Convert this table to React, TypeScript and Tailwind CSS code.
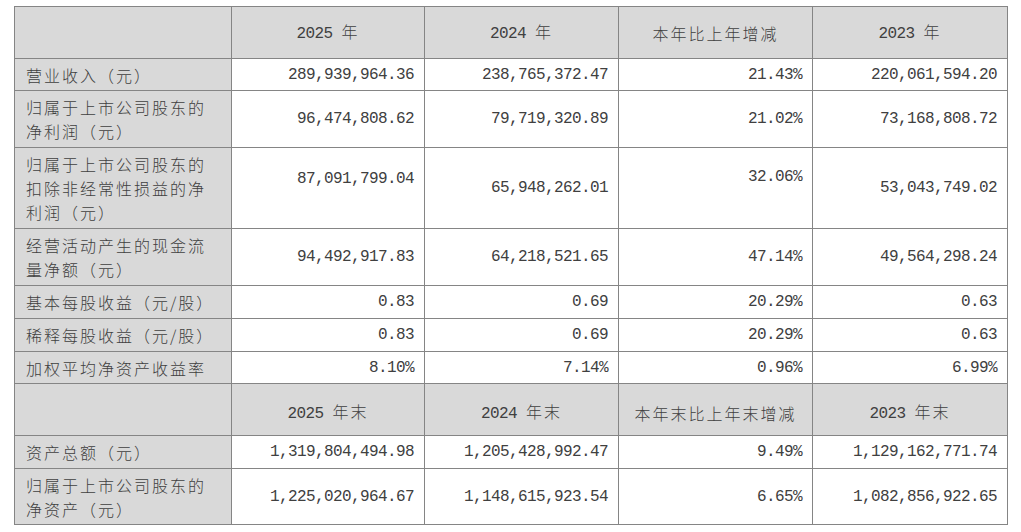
import React from 'react';

type Row = {
  label: string[];
  values: string[];
  h: string;
  header?: boolean;
  pads?: string[];
};

const ROWS: Row[] = [
  { label: [''], values: ['2025 年', '2024 年', '本年比上年增减', '2023 年'], h: 'h-[52px]', header: true },
  { label: ['营业收入（元）'], values: ['289,939,964.36', '238,765,372.47', '21.43%', '220,061,594.20'], h: 'h-[32px]' },
  { label: ['归属于上市公司股东的', '净利润（元）'], values: ['96,474,808.62', '79,719,320.89', '21.02%', '73,168,808.72'], h: 'h-[57px]' },
  {
    label: ['归属于上市公司股东的', '扣除非经常性损益的净', '利润（元）'],
    values: ['87,091,799.04', '65,948,262.01', '32.06%', '53,043,749.02'],
    h: 'h-[81px]',
    pads: ['align-top pt-[19px]', 'align-middle', 'align-top pt-[17px]', 'align-middle'],
  },
  { label: ['经营活动产生的现金流', '量净额（元）'], values: ['94,492,917.83', '64,218,521.65', '47.14%', '49,564,298.24'], h: 'h-[57px]' },
  { label: ['基本每股收益（元/股）'], values: ['0.83', '0.69', '20.29%', '0.63'], h: 'h-[33px]' },
  { label: ['稀释每股收益（元/股）'], values: ['0.83', '0.69', '20.29%', '0.63'], h: 'h-[33px]' },
  { label: ['加权平均净资产收益率'], values: ['8.10%', '7.14%', '0.96%', '6.99%'], h: 'h-[32px]' },
  { label: [''], values: ['2025 年末', '2024 年末', '本年末比上年末增减', '2023 年末'], h: 'h-[52px]', header: true },
  { label: ['资产总额（元）'], values: ['1,319,804,494.98', '1,205,428,992.47', '9.49%', '1,129,162,771.74'], h: 'h-[33px]' },
  { label: ['归属于上市公司股东的', '净资产（元）'], values: ['1,225,020,964.67', '1,148,615,923.54', '6.65%', '1,082,856,922.65'], h: 'h-[56px]' },
];

const cjk = "font-['Noto_Sans_CJK_SC',sans-serif] font-light";
const mono = "font-['Liberation_Mono','Noto_Sans_CJK_SC',monospace]";

export default function App() {
  return (
    <div className="w-[1021px] h-[532px] bg-white pt-[6px] pl-[14px]">
      <table className="table-fixed border-collapse w-[993px] text-[#404040]">
        <colgroup>
          <col className="w-[217px]" />
          <col className="w-[193px]" />
          <col className="w-[194px]" />
          <col className="w-[194px]" />
          <col className="w-[195px]" />
        </colgroup>
        <tbody>
          {ROWS.map((row, i) => (
            <tr key={i} className={row.h}>
              <td className={`border border-[#858585] bg-[#d9d9d9] pl-[11px] pr-1 align-middle ${cjk} text-[16px] leading-[24px] tracking-[2px]`}>
                {row.label.map((l, j) => (
                  <div key={j} className="whitespace-nowrap">{l}</div>
                ))}
              </td>
              {row.values.map((v, j) => {
                if (row.header) {
                  const cjkOnly = !/\d/.test(v);
                  return (
                    <td
                      key={j}
                      className={`border border-[#858585] bg-[#d9d9d9] text-center align-middle whitespace-nowrap ${
                        cjkOnly ? `${cjk} text-[16px] tracking-[2px]` : `${mono} text-[16px] tracking-[-0.6px]`
                      } ${i > 0 ? 'pt-[6px]' : ''}`}
                    >
                      {cjkOnly ? v : (
                        <>
                          {v.split(' ')[0]}{' '}
                          <span className={`${cjk} tracking-[2px]`}>{v.split(' ')[1]}</span>
                        </>
                      )}
                    </td>
                  );
                }
                const pad = row.pads ? row.pads[j] : 'align-middle';
                return (
                  <td
                    key={j}
                    className={`border border-[#858585] bg-white text-right pr-[10px] whitespace-nowrap ${mono} text-[16px] leading-[24px] tracking-[-0.6px] ${pad}`}
                  >
                    {v}
                  </td>
                );
              })}
            </tr>
          ))}
        </tbody>
      </table>
    </div>
  );
}
